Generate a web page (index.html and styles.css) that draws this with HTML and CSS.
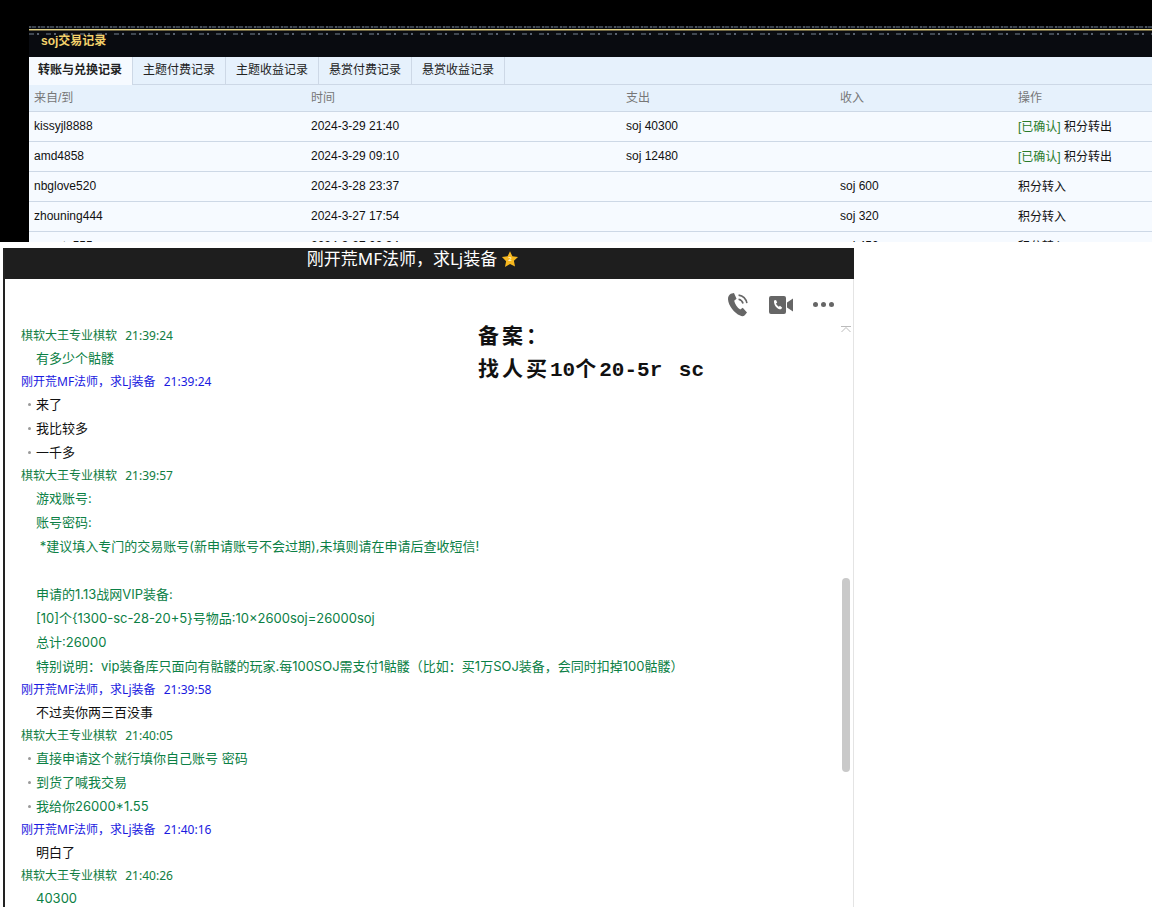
FILE: index.html
```html
<!DOCTYPE html>
<html lang="zh-CN">
<head>
    <meta charset="UTF-8">
    <title>soj交易记录</title>
    <link rel="stylesheet" href="styles.css">
</head>
<body>
    <div class="records">
        <div class="panel">
            <div class="panel-trim"></div>
            <div class="panel-title">soj交易记录</div>
            <div class="tabs">
                <div class="tab active">转账与兑换记录</div>
                <div class="tab">主题付费记录</div>
                <div class="tab">主题收益记录</div>
                <div class="tab">悬赏付费记录</div>
                <div class="tab">悬赏收益记录</div>
            </div>
            <table class="record-table">
                <colgroup>
                    <col class="col-from">
                    <col class="col-time">
                    <col class="col-out">
                    <col class="col-in">
                    <col>
                </colgroup>
                <thead>
                    <tr><th>来自/到</th><th>时间</th><th>支出</th><th>收入</th><th>操作</th></tr>
                </thead>
                <tbody>
                    <tr><td>kissyjl8888</td><td>2024-3-29 21:40</td><td>soj 40300</td><td></td><td><span class="confirmed">[已确认]</span> 积分转出</td></tr>
                    <tr><td>amd4858</td><td>2024-3-29 09:10</td><td>soj 12480</td><td></td><td><span class="confirmed">[已确认]</span> 积分转出</td></tr>
                    <tr><td>nbglove520</td><td>2024-3-28 23:37</td><td></td><td>soj 600</td><td>积分转入</td></tr>
                    <tr><td>zhouning444</td><td>2024-3-27 17:54</td><td></td><td>soj 320</td><td>积分转入</td></tr>
                    <tr><td>wangtu555</td><td>2024-3-27 09:34</td><td></td><td>soj 450</td><td>积分转入</td></tr>
                </tbody>
            </table>
        </div>
    </div>

    <div class="chat">
        <div class="chat-title">
            <span>刚开荒MF法师，求Lj装备</span>
            <svg class="star" viewBox="0 0 24 24" width="18" height="18">
                <path fill="#f7b81f" d="M12 1.5l3.2 6.9 7.5.9-5.5 5.2 1.5 7.5L12 18.8l-6.7 3.7 1.5-7.5L1.3 9.3l7.5-.9z"/>
                <text x="12" y="15" font-size="8" font-weight="bold" text-anchor="middle" fill="#fff3c4">2</text>
            </svg>
        </div>
        <div class="chat-tools">
            <svg class="tool-phone" viewBox="2 0.5 19 22.500" width="23" height="24">
                <path fill="#666" d="M5.2 1.2l3 -.7 2.4 5.4-2.2 1.8c.6 3.2 3 6.7 5.7 8.2l2.3-1.5 4 4.3-2.1 2.6c-1 1-2.7 1.2-4.3.4C8.3 19 3 12.4 2.6 6.3c-.1-2.200.9-4.100 2.600-5.100z"/>
                <path fill="none" stroke="#666" stroke-width="1.500" d="M12.500 2.500c3.800.6 7 3.600 7.800 7.500M12.500 6.300c2 .4 3.700 2 4.200 4"/>
            </svg>
            <svg class="tool-video" viewBox="0 0 24 18" width="24" height="18">
                <path fill="#666" d="M2 0h13a2 2 0 0 1 2 2v14a2 2 0 0 1-2 2H2a2 2 0 0 1-2-2V2a2 2 0 0 1 2-2zM18 6.500l6-4v13l-6-4z"/>
                <path fill="#fff" d="M5 4.500l2-.5 1.200 2.600-1.200 1c.5 1.400 1.500 2.500 2.800 3.200l1.200-1 2.200 2-1.200 1.500c-3.600.2-7.400-3.700-7-8.800z"/>
            </svg>
            <div class="tool-dots"><i></i><i></i><i></i></div>
        </div>
        <div class="chat-log">
            <div class="who seller">棋软大王专业棋软&nbsp;&nbsp;21:39:24</div>
            <div class="msg seller">有多少个骷髅</div>
            <div class="who buyer">刚开荒MF法师，求Lj装备&nbsp;&nbsp;21:39:24</div>
            <div class="msg dot">来了</div>
            <div class="msg dot">我比较多</div>
            <div class="msg dot">一千多</div>
            <div class="who seller">棋软大王专业棋软&nbsp;&nbsp;21:39:57</div>
            <div class="msg seller">游戏账号:</div>
            <div class="msg seller">账号密码:</div>
            <div class="msg seller">&nbsp;*建议填入专门的交易账号(新申请账号不会过期),未填则请在申请后查收短信!</div>
            <div class="msg seller">&nbsp;</div>
            <div class="msg seller">申请的1.13战网VIP装备:</div>
            <div class="msg seller">[10]个{1300-sc-28-20+5}号物品:10×2600soj=26000soj</div>
            <div class="msg seller">总计:26000</div>
            <div class="msg seller">特别说明：vip装备库只面向有骷髅的玩家.每100SOJ需支付1骷髅（比如：买1万SOJ装备，会同时扣掉100骷髅）</div>
            <div class="who buyer">刚开荒MF法师，求Lj装备&nbsp;&nbsp;21:39:58</div>
            <div class="msg">不过卖你两三百没事</div>
            <div class="who seller">棋软大王专业棋软&nbsp;&nbsp;21:40:05</div>
            <div class="msg seller dot">直接申请这个就行填你自己账号 密码</div>
            <div class="msg seller dot">到货了喊我交易</div>
            <div class="msg seller dot">我给你26000*1.55</div>
            <div class="who buyer">刚开荒MF法师，求Lj装备&nbsp;&nbsp;21:40:16</div>
            <div class="msg">明白了</div>
            <div class="who seller">棋软大王专业棋软&nbsp;&nbsp;21:40:26</div>
            <div class="msg seller">40300</div>
        </div>

        <!-- pasted note and scroll controls sit over the log -->
        <div class="note"><span class="note-cjk">备案：</span><br><span class="note-cjk">找人买</span>10<span class="note-cjk">个</span>20-5r&nbsp;sc</div>
        <svg class="scroll-up" viewBox="0 0 10 6" width="10" height="6">
            <path fill="none" stroke="#bbb" d="M0 .5h10M.5 6L5 1.500 9.500 6"/>
        </svg>
        <div class="scroll-thumb"></div>
    </div>
</body>
</html>
```

FILE: styles.css
```css
body {
    margin: 0;
    height: 907px;
    overflow: hidden;
    background-color: #fff;
    font-family: "Liberation Sans", "Noto Sans CJK SC", sans-serif;
}

/* Top crop: transaction records */
.records {
    height: 242px;
    overflow: hidden;
    background-color: #000;
    padding-left: 29px;
    padding-top: 26px;
    box-sizing: border-box;
}

.panel {
    background-color: #f6faff;
}

.panel-trim {
    height: 10px;
    background:
        linear-gradient(#e3d384, #e3d384) 0 3px / 100% 1px no-repeat,
        linear-gradient(#6d6440, #6d6440) 0 4px / 100% 1px no-repeat,
        repeating-linear-gradient(90deg, #4a525c 0 2px, #1a1e24 2px 3px, #3a424c 3px 7px, #0c0e12 7px 9px) 0 0 / 100% 2px no-repeat,
        repeating-linear-gradient(90deg, #3f4751 0 5px, #0c0e12 5px 8px, #596270 8px 10px, #0c0e12 10px 17px) 0 7px / 100% 2px no-repeat,
        #090b10;
}

.panel-title {
    height: 21px;
    padding-left: 12px;
    background-color: #090b10;
    color: #f3d16b;
    font-size: 12px;
    font-weight: bold;
    line-height: 10px;
}

.tabs {
    display: flex;
    height: 28px;
    background-color: #e6f1fc;
    border-bottom: 1px solid #cdd8e6;
    box-sizing: border-box;
}

.tab {
    height: 27px;
    padding: 0 10px;
    border-right: 1px solid #cdd8e6;
    color: #222;
    font-size: 12px;
    line-height: 27px;
}

.tab.active {
    height: 28px;
    padding: 0 10px 0 9px;
    background-color: #f6faff;
    font-weight: bold;
}

.record-table {
    width: 100%;
    table-layout: fixed;
    border-collapse: collapse;
    font-size: 12px;
}

.col-from { width: 277px; }
.col-time { width: 315px; }
.col-out { width: 214px; }
.col-in { width: 178px; }

.record-table th {
    height: 22px;
    padding: 0 5px 4px;
    background-color: #e6f1fc;
    border-bottom: 1px solid #cdd8e6;
    color: #777;
    font-weight: normal;
    text-align: left;
}

.record-table td {
    height: 27px;
    padding: 0 5px 2px;
    border-bottom: 1px solid #cdd8e6;
    color: #111;
}

.confirmed {
    color: #2a7a2a;
}

/* Chat window */
.chat {
    position: relative;
    width: 849px;
    height: 659px;
    margin-top: 6px;
    margin-left: 3px;
    overflow: hidden;
    border-left: 2px solid #222;
    background: linear-gradient(#e4e4e4, #e4e4e4) right / 1px 100% no-repeat;
    font-family: "Inter", "Noto Sans CJK SC", sans-serif;
}

.chat-title {
    display: flex;
    justify-content: center;
    align-items: flex-start;
    gap: 4px;
    height: 31px;
    padding-right: 33px;
    box-sizing: border-box;
    background-color: #1e1e1e;
    color: #fff;
    font-family: "Noto Sans", "Noto Sans CJK SC", sans-serif;
    font-size: 17px;
    line-height: 21px;
}

.star {
    margin-top: 2px;
}

.chat-tools {
    display: flex;
    justify-content: flex-end;
    align-items: center;
    gap: 20px;
    height: 46px;
    padding-right: 20px;
    padding-top: 5px;
    box-sizing: border-box;
}

.tool-dots {
    display: flex;
    gap: 3px;
}

.tool-dots i {
    width: 5px;
    height: 5px;
    border-radius: 50%;
    background-color: #666;
}

.chat-log {
    padding-left: 16px;
}

.who {
    height: 22px;
    font-family: "Noto Sans", "Noto Sans CJK SC", sans-serif;
    font-size: 12px;
    line-height: 22px;
    word-spacing: 1px;
}

.who.seller { color: #107c41; }
.who.buyer { color: #1a1ae0; }

.msg {
    position: relative;
    height: 24px;
    padding-left: 15px;
    color: #111;
    font-size: 13px;
    line-height: 22px;
    white-space: nowrap;
}

.msg.seller { color: #0b8045; }

.msg.dot::before {
    content: "";
    position: absolute;
    left: 7px;
    top: 10px;
    width: 3px;
    height: 3px;
    border-radius: 50%;
    background-color: #999;
}

.note {
    position: absolute;
    left: 473px;
    top: 73px;
    color: #111;
    font-family: "Liberation Mono", "Noto Sans CJK SC", monospace;
    font-size: 21px;
    font-weight: bold;
    line-height: 33px;
    word-spacing: 4px;
}

.note-cjk {
    letter-spacing: 3px;
}

.scroll-up {
    position: absolute;
    left: 836px;
    top: 78px;
}

.scroll-thumb {
    position: absolute;
    left: 837px;
    top: 330px;
    width: 8px;
    height: 194px;
    border-radius: 4px;
    background-color: #c9c9c9;
}
```
